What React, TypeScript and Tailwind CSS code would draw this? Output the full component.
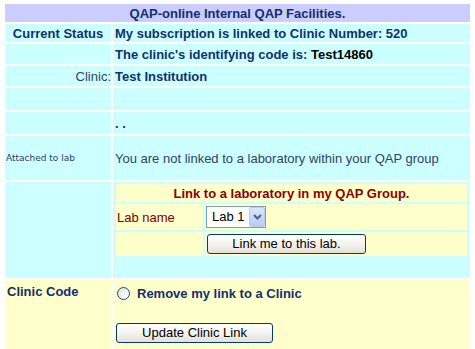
import React from 'react';

function XpButton({ label, width }: { label: string; width: string }) {
  return (
    <button
      className={`${width} h-[20px] rounded-[3px] border border-[#003c74] bg-[linear-gradient(#ffffff_0%,#f4f3ee_50%,#e3e0d6_100%)] text-[13px] leading-[16px] text-black font-['Liberation_Sans',Arial,sans-serif] p-0`}
    >
      {label}
    </button>
  );
}

function XpSelect({ value }: { value: string }) {
  return (
    <div className="w-[60px] h-[22px] border border-[#7f9db9] bg-white flex items-center">
      <span className="flex-1 pl-[5px] text-[13px] leading-[16px] text-black">{value}</span>
      <span className="w-[16px] h-[20px] rounded-[2px] border border-[#b8cbf4] bg-[linear-gradient(#dce6fd,#b6cbf7)] flex items-center justify-center">
        <svg width="9" height="6" viewBox="0 0 9 6">
          <path d="M1 1 L4.5 4.5 L8 1" fill="none" stroke="#4d6185" strokeWidth="2" />
        </svg>
      </span>
    </div>
  );
}

export default function App() {
  const navy = 'text-[#10306e]';
  return (
    <div className="w-[475px] h-[349px] overflow-hidden bg-white font-['Liberation_Sans',Arial,sans-serif] text-[13px] leading-[15px]">
      <table className="ml-[3px] mt-[2px] w-[469px] border-separate border-spacing-[2px]">
        <tbody>
          <tr>
            <td colSpan={2} className={`h-[18px] p-0 bg-[#ccccff] text-center font-bold ${navy}`}>
              QAP-online Internal QAP Facilities.
            </td>
          </tr>
          <tr>
            <td className={`w-[106px] h-[18px] p-0 bg-[#ccffff] text-center font-bold ${navy}`}>Current Status</td>
            <td className={`h-[18px] p-0 pl-[2px] bg-[#ccffff] font-bold ${navy}`}>
              My subscription is linked to Clinic Number: 520
            </td>
          </tr>
          <tr>
            <td className="h-[20px] p-0 bg-[#ccffff]"></td>
            <td className={`h-[20px] p-0 pl-[2px] bg-[#ccffff] font-bold ${navy}`}>
              The clinic's identifying code is: <span className="text-black">Test14860</span>
            </td>
          </tr>
          <tr>
            <td className="h-[20px] p-0 bg-[#ccffff] text-right text-[#33406a]">Clinic:</td>
            <td className={`h-[20px] p-0 pl-[2px] bg-[#ccffff] font-bold ${navy}`}>Test Institution</td>
          </tr>
          <tr>
            <td className="h-[22px] p-0 bg-[#ccffff]"></td>
            <td className="h-[22px] p-0 bg-[#ccffff]"></td>
          </tr>
          <tr>
            <td className="h-[22px] p-0 bg-[#ccffff]"></td>
            <td className={`h-[22px] p-0 pl-[2px] bg-[#ccffff] font-bold ${navy}`}>. .</td>
          </tr>
          <tr>
            <td className="h-[44px] p-0 pl-[1px] bg-[#ccffff] text-[9px] text-[#33406a] font-['DejaVu_Sans',Verdana,sans-serif]">
              Attached to lab
            </td>
            <td className="h-[44px] p-0 pl-[2px] bg-[#ccffff] text-[#33406a]">
              You are not linked to a laboratory within your QAP group
            </td>
          </tr>
          <tr>
            <td className="h-[96px] p-0 bg-[#ccffff]"></td>
            <td className="h-[96px] p-0 px-[1px] bg-[#ccffff] align-top">
              <table className="w-full border-separate border-spacing-[2px]">
                <tbody>
                  <tr>
                    <td colSpan={2} className="h-[18px] p-0 bg-[#ffffcc] text-center font-bold text-[#8b0000]">
                      Link to a laboratory in my QAP Group.
                    </td>
                  </tr>
                  <tr>
                    <td className="w-[87px] h-[26px] p-0 pl-[1px] bg-[#ffffcc] text-[#800000]">Lab name</td>
                    <td className="h-[26px] p-0 pl-[1px] bg-[#ffffcc]">
                      <XpSelect value="Lab 1" />
                    </td>
                  </tr>
                  <tr>
                    <td className="h-[24px] p-0 bg-[#ffffcc]"></td>
                    <td className="h-[24px] p-0 pl-[2px] bg-[#ffffcc]">
                      <XpButton label="Link me to this lab." width="w-[159px]" />
                    </td>
                  </tr>
                </tbody>
              </table>
            </td>
          </tr>
          <tr>
            <td className={`p-0 pl-[2px] pt-[4px] bg-[#ffffcc] align-top font-bold ${navy}`}>Clinic Code</td>
            <td className="p-0 pl-[3px] pt-[6px] pb-[12px] bg-[#ffffcc] align-top">
              <div className="flex items-center h-[14px]">
                <span className="ml-[1px] w-[13px] h-[13px] rounded-full border border-[#1c5180] bg-[radial-gradient(circle_at_65%_65%,#ffffff_0%,#dcdad0_100%)]"></span>
                <span className={`ml-[7px] font-bold ${navy}`}>Remove my link to a Clinic</span>
              </div>
              <div className="mt-[23px]">
                <XpButton label="Update Clinic Link" width="w-[157px]" />
              </div>
            </td>
          </tr>
        </tbody>
      </table>
    </div>
  );
}
